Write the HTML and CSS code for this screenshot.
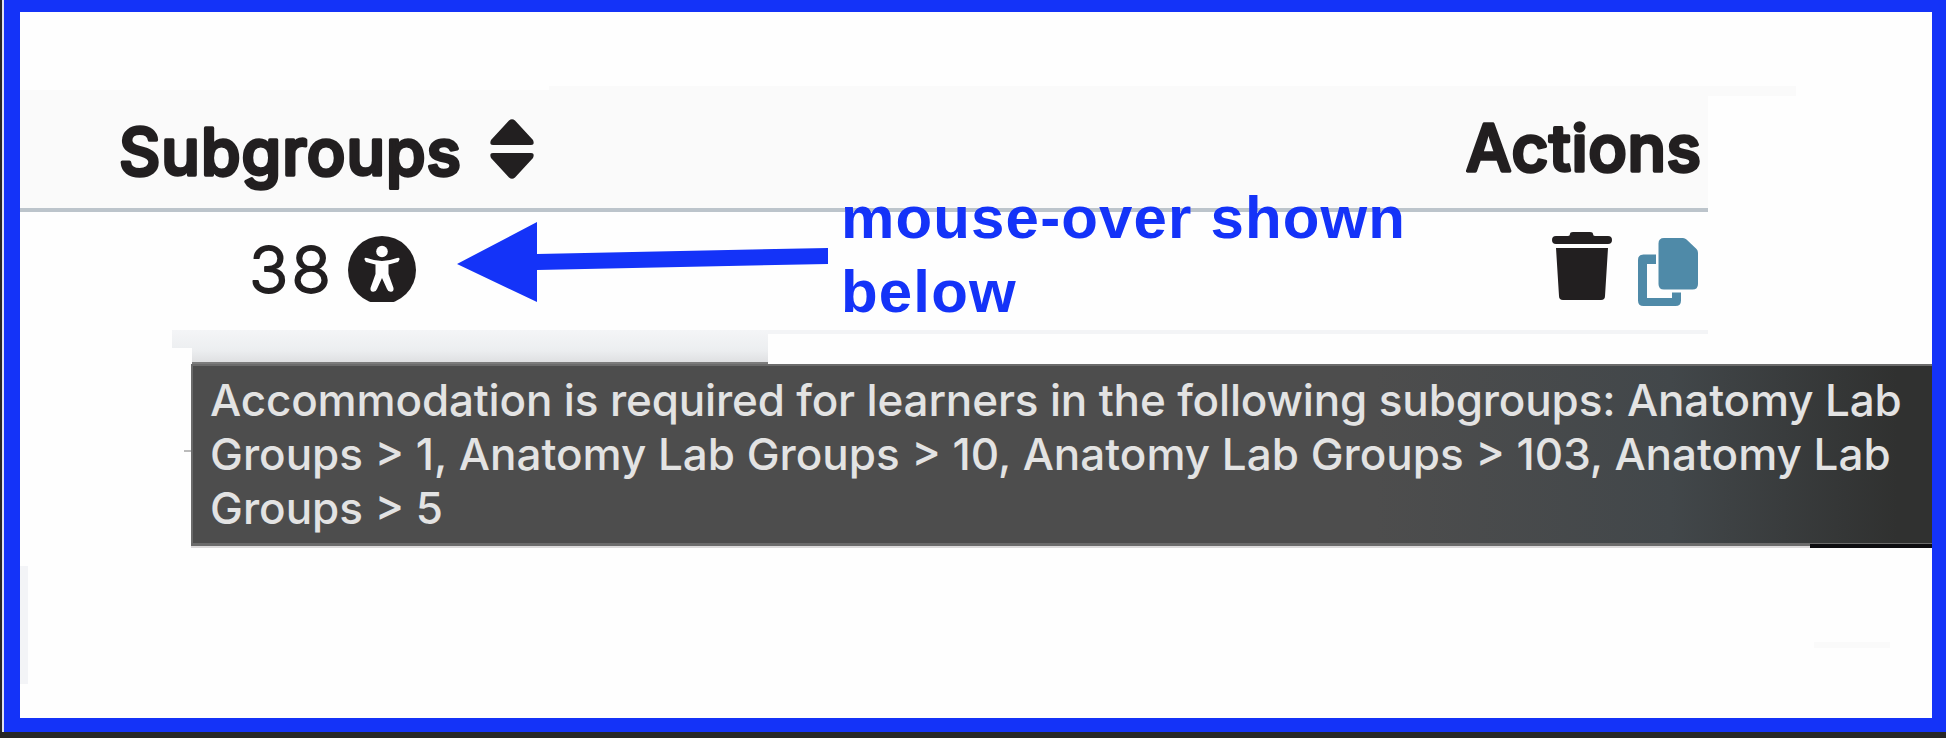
FILE: index.html
```html
<!DOCTYPE html>
<html lang="en">
<head>
<meta charset="utf-8">
<title>Subgroups</title>
<link rel="stylesheet" href="styles.css">
</head>
<body>
<div class="page">
  <main class="frame">
    <div class="table">
      <div class="head">
        <svg class="label label-sub" width="342" height="84"><text x="0" y="63.500" textLength="342">Subgroups</text></svg>
        <svg class="sort" width="44" height="60" viewBox="0 0 44 60"><path d="M19 1.500Q22-1 25 1.500L43 21Q45 26 41 26H3Q-1 26 1 21ZM19 58.500Q22 61 25 58.500L43 39Q45 34 41 34H3Q-1 34 1 39Z"/></svg>
        <svg class="label label-actions" width="238" height="84"><text x="2" y="63.500" textLength="235">Actions</text></svg>
      </div>
      <div class="row">
        <svg class="count" width="80" height="84"><text x="-3" y="63" textLength="82">38</text></svg>
        <svg class="access" width="68" height="66" viewBox="0 0 68 66"><circle cx="34" cy="34" r="34"/><circle class="cut" cx="34" cy="15.500" r="5.800"/><path class="cut" d="M19 22Q16 21 16.500 23.500Q17 26 20 26.500Q25 28 27.500 28.500V38L22.500 52Q22 55.500 25 55.800Q28 56 29 53L34 42L39 53Q40 56 43 55.800Q46 55.500 45.500 52L40.500 38V28.500Q43 28 48 26.500Q51 26 51.500 23.500Q52 21 49 22Q41 25 34 25Q27 25 19 22Z"/></svg>
        <svg class="trash" width="60" height="68" viewBox="0 0 60 68"><path d="M4 4H16Q18 4 18 2Q18 0 21 0H38Q41 0 41 2Q41 4 43 4H56Q60 4 60 8Q60 12 56 12H4Q0 12 0 8Q0 4 4 4ZM4 16H56L53 64Q53 68 49 68H11Q7 68 7 64Z"/></svg>
        <svg class="copy" width="60" height="68" viewBox="0 0 60 68"><path d="M26 0H45Q47 0 48.500 1.500L58.500 11Q60 12.500 60 15V46Q60 51.500 54.500 51.500H26Q20.500 51.500 20.500 46V5.500Q20.500 0 26 0ZM5.500 16.500H18V26H9V60H34V54.500H43V62.500Q43 68 37.500 68H5.500Q0 68 0 62.500V22Q0 16.500 5.500 16.500Z"/></svg>
      </div>
    </div>
    <div class="shade"></div>
    <div class="tick"></div>
    <div class="tooltip">
      <div class="line l1">Accommodation is required for learners in the following subgroups: Anatomy Lab</div>
      <div class="line">Groups &gt; 1, Anatomy Lab Groups &gt; 10, Anatomy Lab Groups &gt; 103, Anatomy Lab</div>
      <div class="line">Groups &gt; 5</div>
    </div>
    <div class="edge"></div>
    <div class="side"></div>
    <div class="smudge"></div>
    <div class="callout">
      <svg class="arrow" width="371" height="80" viewBox="0 0 371 80"><path d="M0 42L80 0V32L371 26V42L80 48V80Z"/></svg>
      <div class="note"><div>mouse-over shown</div><div>below</div></div>
    </div>
  </main>
</div>
</body>
</html>
```
FILE: styles.css
```css
* { box-sizing: border-box; }
body { margin: 0; background: #272727; }
.page {
  width: 1946px;
  height: 738px;
  padding: 0 0 6px 2px;
}
.frame {
  position: relative;
  height: 732px;
  margin-left: 2px;
  border: solid #1433f8;
  border-width: 12px 14px 14px 16px;
  background: #fefefe;
  box-shadow: -2px 0 #dfe1ee;
}
.table { width: 1688px; padding-top: 78px; }
.head {
  position: relative;
  display: flex;
  align-items: flex-start;
  height: 122px;
  border-bottom: 4px solid #bcc4cb;
  background: #fafafa;
}
.head::before {
  content: "";
  position: absolute;
  left: 529px;
  top: -4px;
  width: 1247px;
  height: 10px;
  background: #fafafa;
}
.head svg, .row svg { flex: none; fill: #221f20; }
/* Rounded letter ends come from the round-joined stroke */
.label text, .count text {
  stroke: #221f20;
  stroke-linejoin: round;
  font-family: Inter, sans-serif;
}
.label text {
  font-size: 64px;
  font-weight: 500;
  stroke-width: 3.4px;
}
.label-sub { margin: 21px 0 0 99px; overflow: visible; }
.label-actions { position: relative; margin: 17px 6px 0 auto; }
.sort { margin: 29px 0 0 29px; }
.row {
  display: flex;
  align-items: flex-start;
  height: 122px;
}
.row::after {
  content: "";
  position: absolute;
  left: 152px;
  top: 318px;
  width: 1536px;
  height: 4px;
  background: #f3f4f6;
}
.count { overflow: visible; }
.count text {
  font-size: 65px;
  font-weight: 300;
  stroke-width: 1.800px;
}
.row .count { margin: 18px 16px 0 232px; }
.access { margin-top: 24px; }
.row .access .cut { fill: #fff; }
.trash { margin: 20px 26px 0 auto; }
.row .copy { margin: 26px 10px 0 0; fill: #4f8aa8; }
.shade {
  position: absolute;
  left: 152px;
  top: 318px;
  width: 596px;
  height: 34px;
  background: linear-gradient(#f4f5f7, #eceef0 60%, #dfe0e2 32px, #7c7c7c 32px);
  clip-path: polygon(0 0, 100% 0, 100% 100%, 20px 100%, 20px 18px, 0 18px);
}
.tick {
  position: absolute;
  left: 164px;
  top: 438px;
  width: 8px;
  height: 2px;
  background: #bbb;
}
.tooltip {
  position: absolute;
  left: 171px;
  top: 352px;
  width: 1741px;
  height: 182px;
  padding: 7px 0 0 17px;
  border: solid #6b6b6b;
  border-width: 2px 0 3px 2px;
  background: linear-gradient(90deg, #4d4d4d 0 68%, #42474a 85%, #303130 98%);
  box-shadow: 0 2px #dcdadb;
  color: #e3e3e3;
  font: 500 44px/54px Inter, sans-serif;
  white-space: nowrap;
}
.l1 { letter-spacing: -0.15px; }
.edge {
  position: absolute;
  left: 1790px;
  top: 532px;
  width: 122px;
  height: 4px;
  background: #0d0d10;
}
.side {
  position: absolute;
  left: 0;
  top: 554px;
  width: 8px;
  height: 118px;
  background: #f3f4f7;
}
.smudge {
  position: absolute;
  left: 1794px;
  top: 630px;
  width: 76px;
  height: 6px;
  background: #fafafa;
}
.callout {
  position: absolute;
  left: 437px;
  top: 168px;
  display: flex;
  align-items: flex-start;
  color: #1433f8;
}
.arrow { margin-top: 42px; fill: #1433f8; }
.note {
  margin: 1px 0 0 13px;
  font: 700 60px/74px "Liberation Sans", Arial, sans-serif;
  letter-spacing: 1.150px;
  white-space: nowrap;
}
```
